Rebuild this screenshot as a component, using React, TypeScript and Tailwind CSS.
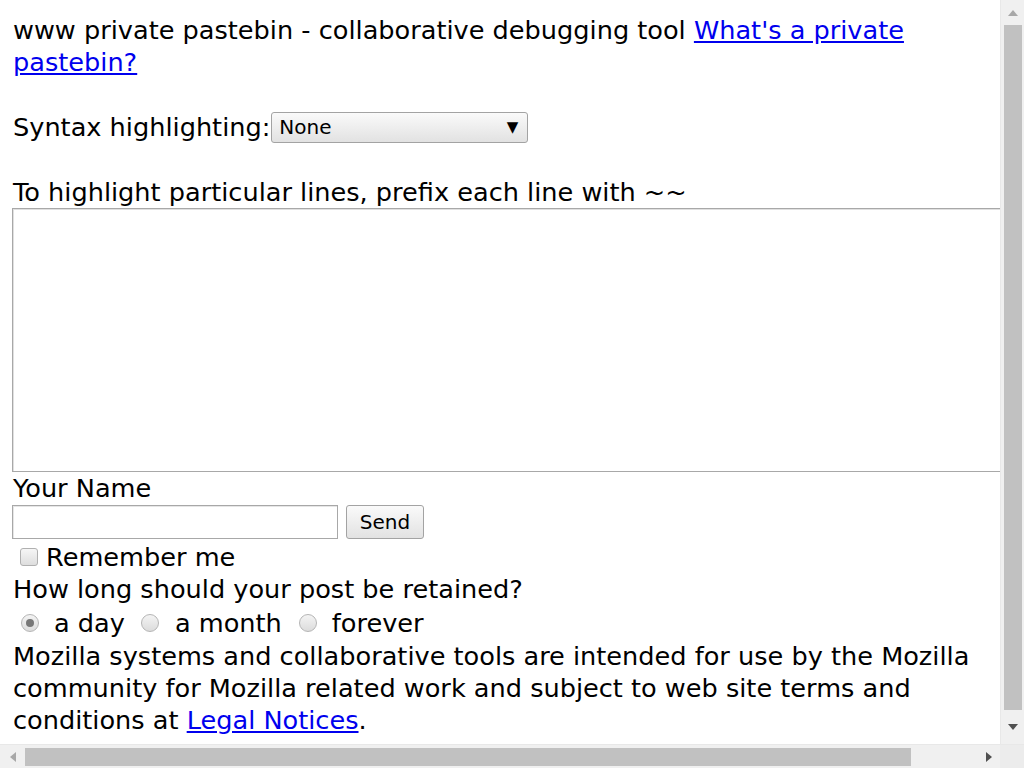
// Private pastebin form, shown inside a fixed viewport with scrollbars
const font = { fontFamily: '"DejaVu Sans", "Liberation Sans", sans-serif' };

function Radio({ checked }: { checked?: boolean }) {
  return (
    <span className="inline-flex items-center justify-center w-[18px] h-[18px] rounded-full border border-[#b5b5b5] bg-gradient-to-b from-[#f4f4f4] to-[#dcdcdc]">
      {checked && <span className="w-[8px] h-[8px] rounded-full bg-[#777]" />}
    </span>
  );
}

export default function App() {
  return (
    <div
      className="w-[1024px] h-[768px] flex flex-col overflow-hidden bg-white text-black text-[25.6px] leading-[32px]"
      style={font}
    >
      <div className="flex flex-1 min-h-0">
        {/* page content */}
        <div className="flex-1 min-w-0 overflow-hidden pl-[13px] pt-[14px]">
          <p>
            www private pastebin - collaborative debugging tool{" "}
            <a href="#" className="text-[#0000ee] underline">
              What's a private pastebin?
            </a>
          </p>

          <div className="mt-[33px] flex items-center h-[32px]">
            <span>Syntax highlighting:</span>
            <div className="ml-[1px] w-[257px] h-[31px] flex items-center justify-between pl-[7px] pr-[9px] border border-[#a3a3a3] rounded-[3px] bg-gradient-to-b from-[#fafafa] to-[#e2e2e2] text-[20px]">
              <span>None</span>
              <span className="text-[15px]">▼</span>
            </div>
          </div>

          <p className="mt-[33px]">To highlight particular lines, prefix each line with ~~</p>
          <div className="-ml-[1px] w-[1010px] h-[264px] border border-[#a8a8a8] shadow-[inset_1px_1px_0_#e0e0e0] bg-white" />

          <p>Your Name</p>
          <div className="flex items-start pt-[1px] h-[37px] -ml-[1px]">
            <div className="w-[326px] h-[34px] border border-[#a8a8a8] shadow-[inset_1px_1px_0_#e6e6e6] bg-white" />
            <div className="ml-[8px] w-[78px] h-[34px] flex items-center justify-center border border-[#a3a3a3] rounded-[3px] bg-gradient-to-b from-[#fafafa] to-[#e2e2e2] text-[20px]">
              Send
            </div>
          </div>

          <div className="flex items-center h-[32px]">
            <span className="ml-[7px] mr-[8px] w-[18px] h-[18px] rounded-[3px] border border-[#b0b0b0] bg-gradient-to-b from-[#f6f6f6] to-[#dedede]" />
            <span>Remember me</span>
          </div>

          <p>How long should your post be retained?</p>

          <div className="flex items-center h-[35px]">
            <span className="ml-[8px] mr-[15px] flex"><Radio checked /></span>
            <span>a day</span>
            <span className="ml-[16px] mr-[16px] flex"><Radio /></span>
            <span>a month</span>
            <span className="ml-[17px] mr-[15px] flex"><Radio /></span>
            <span>forever</span>
          </div>

          <p>
            Mozilla systems and collaborative tools are intended for use by the Mozilla community
            for Mozilla related work and subject to web site terms and conditions at{" "}
            <a href="#" className="text-[#0000ee] underline">
              Legal Notices
            </a>
            .
          </p>
        </div>

        {/* vertical scrollbar */}
        <div className="w-[24px] flex flex-col items-center bg-[#f0f0f0] border-l border-[#e8e8e8]">
          <div className="h-[25px] flex items-center justify-center">
            <svg width="10" height="6" viewBox="0 0 10 6"><path d="M0 6 L5 0 L10 6 Z" fill="#a8a8a8" /></svg>
          </div>
          <div className="w-[18px] flex-1 bg-[#c1c1c1]" />
          <div className="h-[34px] flex items-center justify-center">
            <svg width="10" height="6" viewBox="0 0 10 6"><path d="M0 0 L5 6 L10 0 Z" fill="#505050" /></svg>
          </div>
        </div>
      </div>

      {/* horizontal scrollbar */}
      <div className="h-[24px] flex bg-[#f0f0f0] border-t border-[#e8e8e8]">
        <div className="flex-1 flex items-center">
          <div className="w-[25px] flex items-center justify-center">
            <svg width="6" height="10" viewBox="0 0 6 10"><path d="M6 0 L0 5 L6 10 Z" fill="#a8a8a8" /></svg>
          </div>
          <div className="w-[886px] h-[18px] bg-[#c1c1c1]" />
          <div className="flex-1 flex items-center justify-end pr-[8px]">
            <svg width="6" height="10" viewBox="0 0 6 10"><path d="M0 0 L6 5 L0 10 Z" fill="#505050" /></svg>
          </div>
        </div>
        <div className="w-[24px] bg-[#ececec]" />
      </div>
    </div>
  );
}
